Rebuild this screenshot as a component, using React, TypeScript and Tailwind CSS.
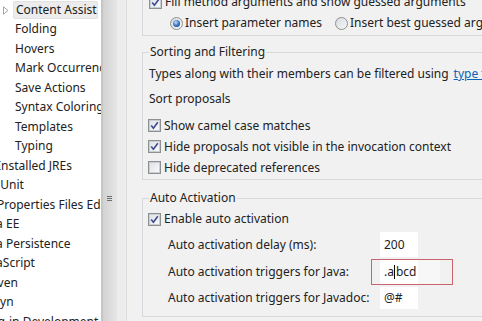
import React from 'react';

type TreeItem = { label: string; cls: string; selected?: boolean };

const treeItems: TreeItem[] = [
  { label: 'Content Assist', cls: 'ml-[13px] pl-[2px]', selected: true },
  { label: 'Folding', cls: 'ml-[15px]' },
  { label: 'Hovers', cls: 'ml-[15px]' },
  { label: 'Mark Occurrences', cls: 'ml-[15px]' },
  { label: 'Save Actions', cls: 'ml-[15px]' },
  { label: 'Syntax Coloring', cls: 'ml-[15px]' },
  { label: 'Templates', cls: 'ml-[15px]' },
  { label: 'Typing', cls: 'ml-[15px]' },
  { label: 'Installed JREs', cls: '-ml-[3px]' },
  { label: 'JUnit', cls: '-ml-[3px]' },
  { label: 'Properties Files Editor', cls: '-ml-[3px]' },
  { label: 'Java EE', cls: '-ml-[20px]' },
  { label: 'Java Persistence', cls: '-ml-[20px]' },
  { label: 'JavaScript', cls: '-ml-[20px]' },
  { label: 'Maven', cls: '-ml-[20px]' },
  { label: 'Mylyn', cls: '-ml-[20px]' },
  { label: 'Plug-in Development', cls: '-ml-[20px]' },
];

const Check: React.FC<{ checked?: boolean }> = ({ checked }) => (
  <span className="flex h-[13px] w-[13px] shrink-0 items-center justify-center border border-[#8e8f8f] bg-white">
    <span className="flex h-[11px] w-[11px] items-center justify-center border border-[#c9cdd4] bg-gradient-to-br from-[#dfe2e8] to-[#f8f9fb]">
      {checked && (
        <svg width="9" height="9" viewBox="0 0 9 9">
          <path d="M1.2 4.6 L3.4 7.2 L7.8 1.3" fill="none" stroke="#3c4a8e" strokeWidth="1.6" />
        </svg>
      )}
    </span>
  </span>
);

const Radio: React.FC<{ checked?: boolean }> = ({ checked }) => (
  <span className="flex h-[13px] w-[13px] shrink-0 items-center justify-center rounded-full border border-[#8e8f8f] bg-gradient-to-br from-[#d8dbe0] to-[#f7f7f7]">
    {checked && (
      <span className="h-[7px] w-[7px] rounded-full bg-[radial-gradient(circle_at_40%_35%,#bfe0ff,#2a64b0_60%,#1b3f78)]" />
    )}
  </span>
);

const Field: React.FC<{ value: string; cursor?: boolean }> = ({ value, cursor }) => (
  <div className="flex h-full w-[38px] items-center bg-white pl-[4px] text-[#222]">
    {cursor ? (
      <span className="flex items-center">
        .a<span className="mx-[0.5px] inline-block h-[14px] w-px bg-black" />bcd
      </span>
    ) : (
      value
    )}
  </div>
);

export default function App() {
  return (
    <div className="flex h-[321px] w-[482px] overflow-hidden bg-[#f1f1f1] font-['Noto_Sans',sans-serif] text-[12px] text-[#222]">
      {/* tree */}
      <div className="relative h-full w-[101px] shrink-0 overflow-hidden bg-white">
        <svg className="absolute left-[3px] top-[6px]" width="6" height="9" viewBox="0 0 6 9">
          <path d="M0.5 0.8 L5 4.5 L0.5 8.2 Z" fill="none" stroke="#a6a6a6" strokeWidth="1" />
        </svg>
        {treeItems.map((it) => (
          <div key={it.label} className="flex h-[19.5px] items-center whitespace-nowrap">
            {it.selected ? (
              <span className={`${it.cls} flex h-[18px] w-[85px] items-center rounded-[2px] border border-[#e2e2e2] bg-[#ececec]`}>
                {it.label}
              </span>
            ) : (
              <span className={it.cls}>{it.label}</span>
            )}
          </div>
        ))}
      </div>

      {/* sash / scroller */}
      <div className="relative h-full w-[16px] shrink-0 border-l-2 border-[#c6c6c6] bg-gradient-to-r from-[#d2d2d2] to-[#e6e6e6]">
        <div className="absolute left-[4px] top-[196px] flex flex-col gap-[1px]">
          <span className="h-px w-[5px] bg-[#6f6f6f]" />
          <span className="h-px w-[5px] bg-[#6f6f6f]" />
          <span className="h-px w-[5px] bg-[#6f6f6f]" />
        </div>
      </div>
      <div className="h-full w-[10px] shrink-0 border-r border-[#dcdcdc] bg-[#ececec]" />

      {/* preferences page */}
      <div className="relative h-full min-w-0 flex-1 overflow-hidden pl-[15px]">
        <div className="w-[420px]">
          {/* insertion group */}
          <div className="-mt-[9px] h-[45px] border-b border-l border-[#d5d9dd]">
            <div className="flex h-[22px] items-center gap-[3px] pl-[6px] whitespace-nowrap">
              <Check checked />
              <span>Fill method arguments and show guessed arguments</span>
            </div>
            <div className="flex h-[20px] items-center pl-[27px] whitespace-nowrap">
              <div className="flex w-[165px] items-center gap-[2px]">
                <Radio checked />
                <span>Insert parameter names</span>
              </div>
              <div className="flex items-center gap-[2px]">
                <Radio />
                <span>Insert best guessed arguments</span>
              </div>
            </div>
          </div>

          {/* sorting and filtering */}
          <fieldset className="mt-[8px] border-y border-l border-[#d5d9dd] pb-px">
            <legend className="ml-[6px] h-[16px] px-px leading-[16px]">Sorting and Filtering</legend>
            <div className="flex h-[28px] items-center pl-[6px] whitespace-nowrap">
              Types along with their members can be filtered using
              <span className="ml-[5px] text-[#0a64b8] underline">type filters</span>
            </div>
            <div className="flex h-[22px] items-center pl-[6px]">Sort proposals</div>
            <div className="mt-[5px]">
              {[
                ['Show camel case matches', true],
                ['Hide proposals not visible in the invocation context', true],
                ['Hide deprecated references', false],
              ].map(([label, on]) => (
                <div key={label as string} className="flex h-[21px] items-center gap-[3px] pl-[5px] whitespace-nowrap">
                  <Check checked={on as boolean} />
                  <span>{label}</span>
                </div>
              ))}
            </div>
          </fieldset>

          {/* auto activation */}
          <fieldset className="mt-[10px] border-y border-l border-[#d5d9dd] pb-[7px]">
            <legend className="ml-[6px] h-[16px] px-px leading-[16px]">Auto Activation</legend>
            <div className="mt-[2px] flex h-[22px] items-center gap-[3px] pl-[5px] whitespace-nowrap">
              <Check checked />
              <span>Enable auto activation</span>
            </div>
            <div className="mt-[2px] flex h-[25px] items-center pl-[25px] whitespace-nowrap">
              <span className="w-[212px]">Auto activation delay (ms):</span>
              <Field value="200" />
            </div>
            <div className="mt-[2px] flex h-[25px] items-center pl-[25px] whitespace-nowrap">
              <span className="w-[212px]">Auto activation triggers for Java:</span>
              <Field value=".abcd" cursor />
              <div className="h-full w-[22px] bg-[#f7f7f7]" />
            </div>
            <div className="mt-[3px] flex h-[22px] items-center pl-[25px] whitespace-nowrap">
              <span className="w-[212px]">Auto activation triggers for Javadoc:</span>
              <Field value="@#" />
            </div>
          </fieldset>
        </div>

        {/* highlight annotation */}
        <div className="absolute left-[244px] top-[259px] h-[26px] w-[82px] border-[1.5px] border-[#c9646e]" />
      </div>
    </div>
  );
}
